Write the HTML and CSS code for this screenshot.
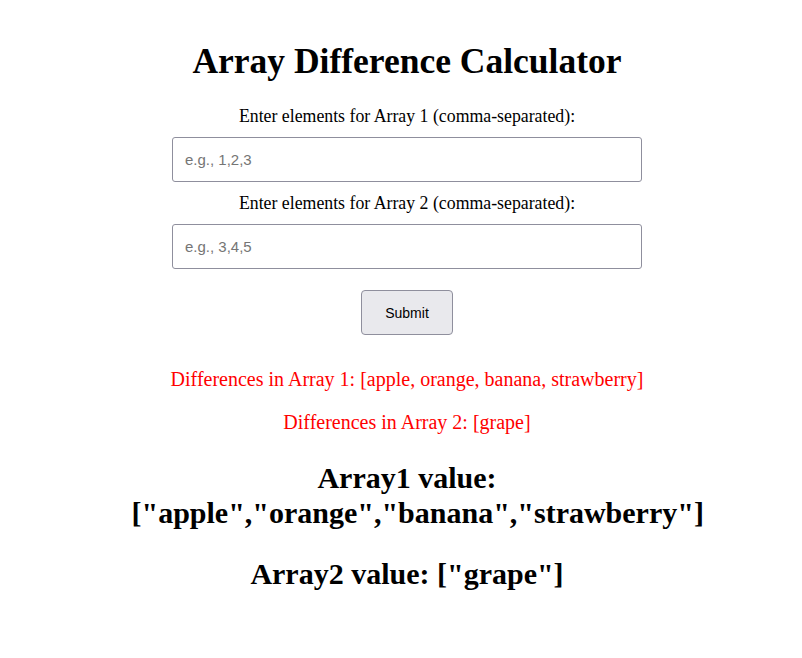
FILE: index.html
```html
<!DOCTYPE html>
<html>
<head>
<meta charset="utf-8">
<link rel="stylesheet" href="styles.css">
</head>
<body>
<main class="app">
  <h1 class="title">Array Difference Calculator</h1>
  <form class="form">
    <label class="label">Enter elements for Array 1 (comma-separated):</label>
    <input class="field" type="text" placeholder="e.g., 1,2,3">
    <label class="label">Enter elements for Array 2 (comma-separated):</label>
    <input class="field" type="text" placeholder="e.g., 3,4,5">
    <button class="submit" type="button">Submit</button>
  </form>
  <p class="diff">Differences in Array 1: [apple, orange, banana, strawberry]</p>
  <p class="diff">Differences in Array 2: [grape]</p>
  <h2 class="value">Array1 value: ["apple","orange","banana","strawberry"]</h2>
  <h2 class="value">Array2 value: ["grape"]</h2>
</main>
</body>
</html>
```
FILE: styles.css
```css
html, body {
  margin: 0;
  background: #fff;
}
body {
  font-family: "Liberation Serif", "Times New Roman", serif;
  color: #000;
}
.app {
  width: 551px;
  margin: 0 auto;
  padding-left: 12px;
  display: flex;
  flex-direction: column;
  align-items: center;
  text-align: center;
}
.title {
  font-size: 35.5px;
  font-weight: bold;
  margin: 41px 0 0;
  line-height: 41px;
  white-space: nowrap;
}
.form {
  display: flex;
  flex-direction: column;
  align-items: center;
  width: 100%;
  margin-top: 24px;
}
.label {
  font-size: 17.8px;
  line-height: 20px;
  margin-bottom: 11px;
}
.field {
  box-sizing: border-box;
  width: 470px;
  height: 45px;
  border: 1px solid #8f8f9d;
  border-radius: 3px;
  padding: 0 12px;
  font-family: "Liberation Sans", Arial, sans-serif;
  font-size: 15px;
  margin-bottom: 11px;
  background: #fff;
}
.field::placeholder {
  color: #757575;
}
.submit {
  margin-top: 10px;
  width: 92px;
  height: 45px;
  border: 1px solid #8f8f9d;
  border-radius: 4px;
  background: #e9e9ed;
  font-family: "Liberation Sans", Arial, sans-serif;
  font-size: 14px;
  color: #000;
}
.diff {
  color: #ff0000;
  font-size: 20px;
  line-height: 23px;
  margin: 20px 0 0;
  white-space: nowrap;
}
.diff:first-of-type {
  margin-top: 33px;
}
.value {
  width: 100%;
  font-size: 30px;
  font-weight: bold;
  line-height: 35px;
  margin: 26px 0 0;
}
```
